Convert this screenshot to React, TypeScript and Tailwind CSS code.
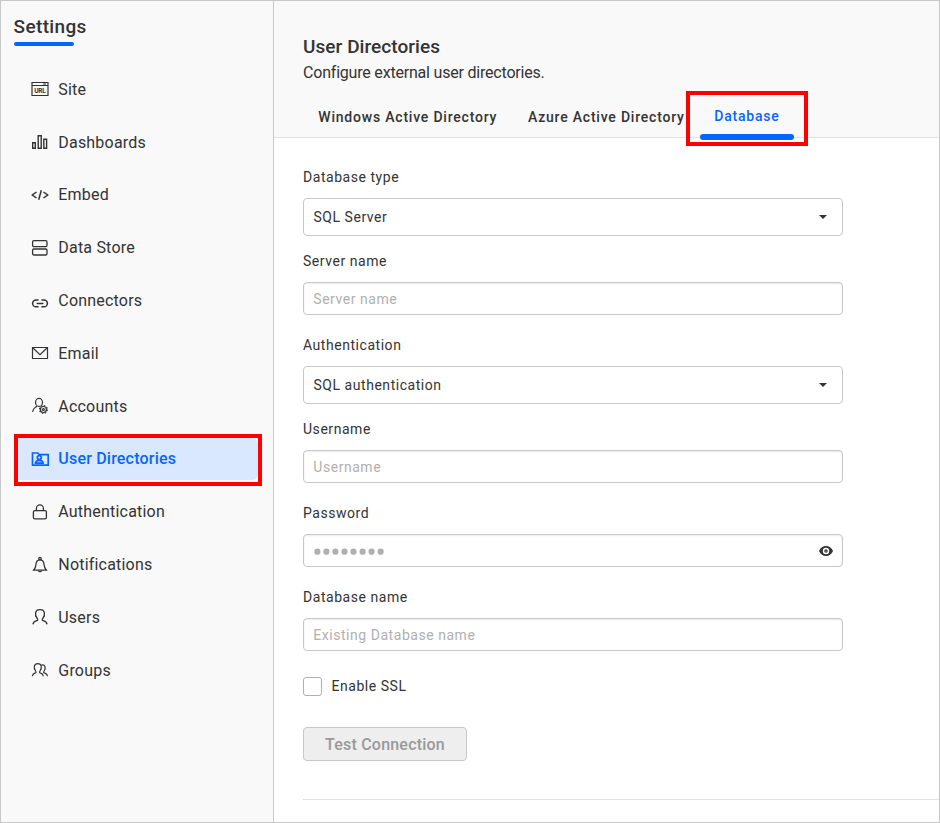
import type { ReactNode } from "react";

const s = { fill: "none", stroke: "currentColor", strokeWidth: 1.2 };

const icons: Record<string, ReactNode> = {
  Site: (
    <g {...s}>
      <path d="M1 2.500h16v13H1zM1 5.500h16M12 4h3" />
      <text x="3.200" y="13.400" fontSize="6.500" fontWeight="700" textLength="11.600" fill="currentColor" stroke="none">
        URL
      </text>
    </g>
  ),
  Dashboards: <path {...s} strokeWidth={1.400} d="M1.700 9.700h2.600v5.600H1.700zM7.200 2.700h3v12.600h-3zM12.800 6.200h2.800v9.100h-2.800z" />,
  Embed: <path {...s} strokeWidth={1.500} d="M5.500 6 1.300 9l4.200 3M12.500 6l4.200 3-4.200 3M10.300 4.200 7.700 13.800" />,
  "Data Store": (
    <g {...s} strokeWidth={1.300}>
      <rect x="1.600" y="1.600" width="14.400" height="6" rx="1.300" />
      <rect x="1.600" y="10" width="14.400" height="6" rx="1.300" />
    </g>
  ),
  Connectors: <path {...s} strokeWidth={1.500} d="M7.600 8H5a3.400 3.400 0 0 0 0 6.800h2.600M10.400 8H13a3.400 3.400 0 0 1 0 6.800h-2.600M5.600 11.400h6.800" />,
  Email: <path {...s} d="M1.500 3.500h15v11h-15zM1.800 3.800 9 10.600l7.200-6.800" />,
  Accounts: (
    <g {...s}>
      <ellipse cx="8" cy="5.400" rx="3.500" ry="4" />
      <path d="M1.600 15c.5-3.200 1.500-4.500 4.600-5.800" />
      <circle cx="12.400" cy="12.500" r="3" />
      <circle cx="12.400" cy="12.500" r="1" />
      <circle cx="12.400" cy="12.500" r="3.900" strokeDasharray="1.500 1.560" />
    </g>
  ),
  "User Directories": (
    <g {...s} strokeWidth={1.700}>
      <path d="M1.500 15.200V3h5.300l1.500 1.700h8.900v10.500z" />
      <circle cx="8.300" cy="7.600" r="2" />
      <path d="M4.500 13.200c.2-2.200 1.600-2.900 3.800-2.900s3.600.7 3.800 2.900z" />
    </g>
  ),
  Authentication: (
    <g {...s} strokeWidth={1.300}>
      <rect x="2.400" y="7.600" width="13" height="8.200" rx="1.400" />
      <path d="M5.400 7.400V5.400a3.500 3.500 0 0 1 7 0v2" />
    </g>
  ),
  Notifications: (
    <g {...s} strokeWidth={1.300}>
      <path d="M2.600 14.200C4.400 12.200 4.800 10.800 5 8.200 5.300 5.200 6.600 3.900 9 3.900s3.700 1.300 4 4.300c.2 2.600.6 4 2.400 6z" />
      <circle cx="9" cy="2.600" r="1.200" />
      <path d="M7.200 14.500c.3 1.700 3.300 1.700 3.600 0" />
    </g>
  ),
  Users: (
    <path {...s} strokeWidth={1.300} d="M2 16.400c.2-2.200 1-3 3.300-3.500 1.700-.4 1.800-1.300.9-2.400C3.200 6.500 4 1.700 9 1.700s5.800 4.800 2.800 8.800c-.9 1.100-.8 2 .9 2.400 2.300.5 3.100 1.300 3.300 3.500" />
  ),
  Groups: (
    <g {...s}>
      <path d="M1.300 15.200c.2-2 .9-2.500 2.600-3 1.500-.4 1.400-1.300.7-2.200C2.300 6.700 2.900 2.600 6.800 2.600S11.300 6.700 9 10c-.7.9-.8 1.800.7 2.200 1.700.5 2.400 1 2.600 3" />
      <path d="M10.400 4c3.700-.9 4.800 3 2.700 6-.7.9-.7 1.700.7 2.100 1.700.5 2.500 1.100 2.700 3.100" />
    </g>
  ),
};

function NavItem({ name, active }: { name: string; active?: boolean }) {
  return (
    <li className="flex h-[52.82px] items-center pl-[17px]">
      <a
        className={
          active
            ? "mb-px flex h-[42px] w-[240px] items-center rounded-r-md bg-[#d9e8ff] pl-[13px] font-medium text-[#0565ff]"
            : "flex h-[42px] w-[240px] items-center pl-[13px]"
        }
      >
        <svg className={active ? "mr-[9.300px] h-[18px] w-[18px]" : "mb-px mr-[9.300px] h-[18px] w-[18px]"} viewBox="0 0 18 18">
          {icons[name]}
        </svg>
        <span className="text-[16px] tracking-[0.2px]">{name}</span>
      </a>
    </li>
  );
}

function Field({ label, value, placeholder, eye }: { label: string; value?: string; placeholder?: string; eye?: boolean }) {
  return (
    <div className="h-[84px] w-[540px]">
      <div className="mb-[11px] h-5 text-[14px] leading-5 tracking-[0.54px]">{label}</div>
      {value ? (
        <div className="flex h-[38px] items-center justify-between rounded border border-[#c8c8c8] pl-[9.500px] pr-[15px] text-[14px] tracking-[0.54px]">
          {value}
          <svg width="8" height="4" viewBox="0 0 8 4">
            <path d="M0 0h8L4 4z" fill="#333" />
          </svg>
        </div>
      ) : (
        <div className="flex h-[33px] items-center justify-between rounded border border-[#c8c8c8] pl-[9.300px] pr-[9px] text-[14px] tracking-[0.54px] text-[#b0b0b0] shadow-[inset_0_1px_2px_rgba(0,0,0,0.09)]">
          {eye ? (
            <svg width="72" height="8" viewBox="0 0 72 8" fill="#b0b0b0">
              {[4.4, 13.4, 22.4, 31.5, 40.5, 49.6, 58.6, 67.6].map((x) => (
                <circle key={x} cx={x} cy="4.700" r="3.1" />
              ))}
            </svg>
          ) : (
            <span className="pt-[2px]">{placeholder}</span>
          )}
          {eye && (
            <svg width="14" height="10" viewBox="0 0 14 10">
              <path d="M0 5C1.500 1.600 4 0 7 0s5.500 1.600 7 5c-1.500 3.400-4 5-7 5S1.500 8.400 0 5z" fill="#333" />
              <circle cx="7" cy="5" r="3.200" fill="#fff" />
              <circle cx="7" cy="5" r="1.800" fill="#333" />
              <circle cx="7" cy="5" r="0.600" fill="#fff" />
            </svg>
          )}
        </div>
      )}
    </div>
  );
}

const nav = ["Site", "Dashboards", "Embed", "Data Store", "Connectors", "Email", "Accounts", "User Directories", "Authentication", "Notifications", "Users", "Groups"];

export default function App() {
  return (
    <div className="relative flex h-[823px] w-[940px] overflow-hidden border border-[#c8c8c8] bg-white font-['Roboto',sans-serif] text-[#333]">
      <aside className="w-[273px] shrink-0 border-r border-[#c8c8c8] bg-[#f9f9f9]">
        <div className="h-[62.400px] pl-[12.600px] pt-[14px]">
          <h1 className="h-6 text-[19px] font-medium leading-6 tracking-[0.35px]">Settings</h1>
          <div className="ml-[0.400px] mt-[3px] h-[4px] w-[60px] rounded-full bg-[#0565ff]" />
        </div>
        <ul>
          {nav.map((n) => (
            <NavItem key={n} name={n} active={n === "User Directories"} />
          ))}
        </ul>
      </aside>
      <main className="min-w-0 flex-1">
        <header className="h-[137px] border-b border-[#e2e2e2] bg-[#f9f9f9] pl-[29px] pt-[34px]">
          <h2 className="h-6 text-[19px] font-medium leading-6 tracking-[0.060px]">User Directories</h2>
          <p className="mt-[2px] h-6 text-[16px] leading-6 tracking-[-0.200px]">Configure external user directories.</p>
          <nav className="mt-[22px] flex text-[14px] font-medium leading-5 tracking-[0.790px]">
            <span className="ml-[15.300px] w-[209.700px] whitespace-nowrap">Windows Active Directory</span>
            <span className="w-[172px] whitespace-nowrap">Azure Active Directory</span>
            <span className="-mt-px w-[94px] pl-[14.300px] text-[#0565ff]">Database</span>
          </nav>
        </header>
        <section className="pl-[29px] pt-[29px]">
          <Field label="Database type" value="SQL Server" />
          <Field label="Server name" placeholder="Server name" />
          <Field label="Authentication" value="SQL authentication" />
          <Field label="Username" placeholder="Username" />
          <Field label="Password" eye />
          <Field label="Database name" placeholder="Existing Database name" />
          <label className="mt-[6px] flex h-[19px] items-center text-[14px] tracking-[0.54px]">
            <span className="mr-[9.500px] h-[19px] w-[19px] rounded-[3px] border border-[#b0b0b0]" />
            Enable SSL
          </label>
          <button className="mt-[31px] block h-[34px] w-[164px] rounded border border-[#c8c8c8] bg-[#eee] pt-[2px] text-[16px] font-medium leading-none tracking-[0.2px] text-[#999]">
            Test Connection
          </button>
          <hr className="mt-[38px] border-[#e2e2e2]" />
        </section>
      </main>
      <div className="absolute left-[699px] top-[133px] h-[6px] w-[94px] rounded-[3px] bg-[#0565ff]" />
      <div className="absolute left-[685px] top-[90px] h-[55px] w-[122px] border-4 border-[#fe0000]" />
      <div className="absolute left-[13px] top-[433px] h-[52px] w-[248px] border-4 border-[#fe0000]" />
    </div>
  );
}
